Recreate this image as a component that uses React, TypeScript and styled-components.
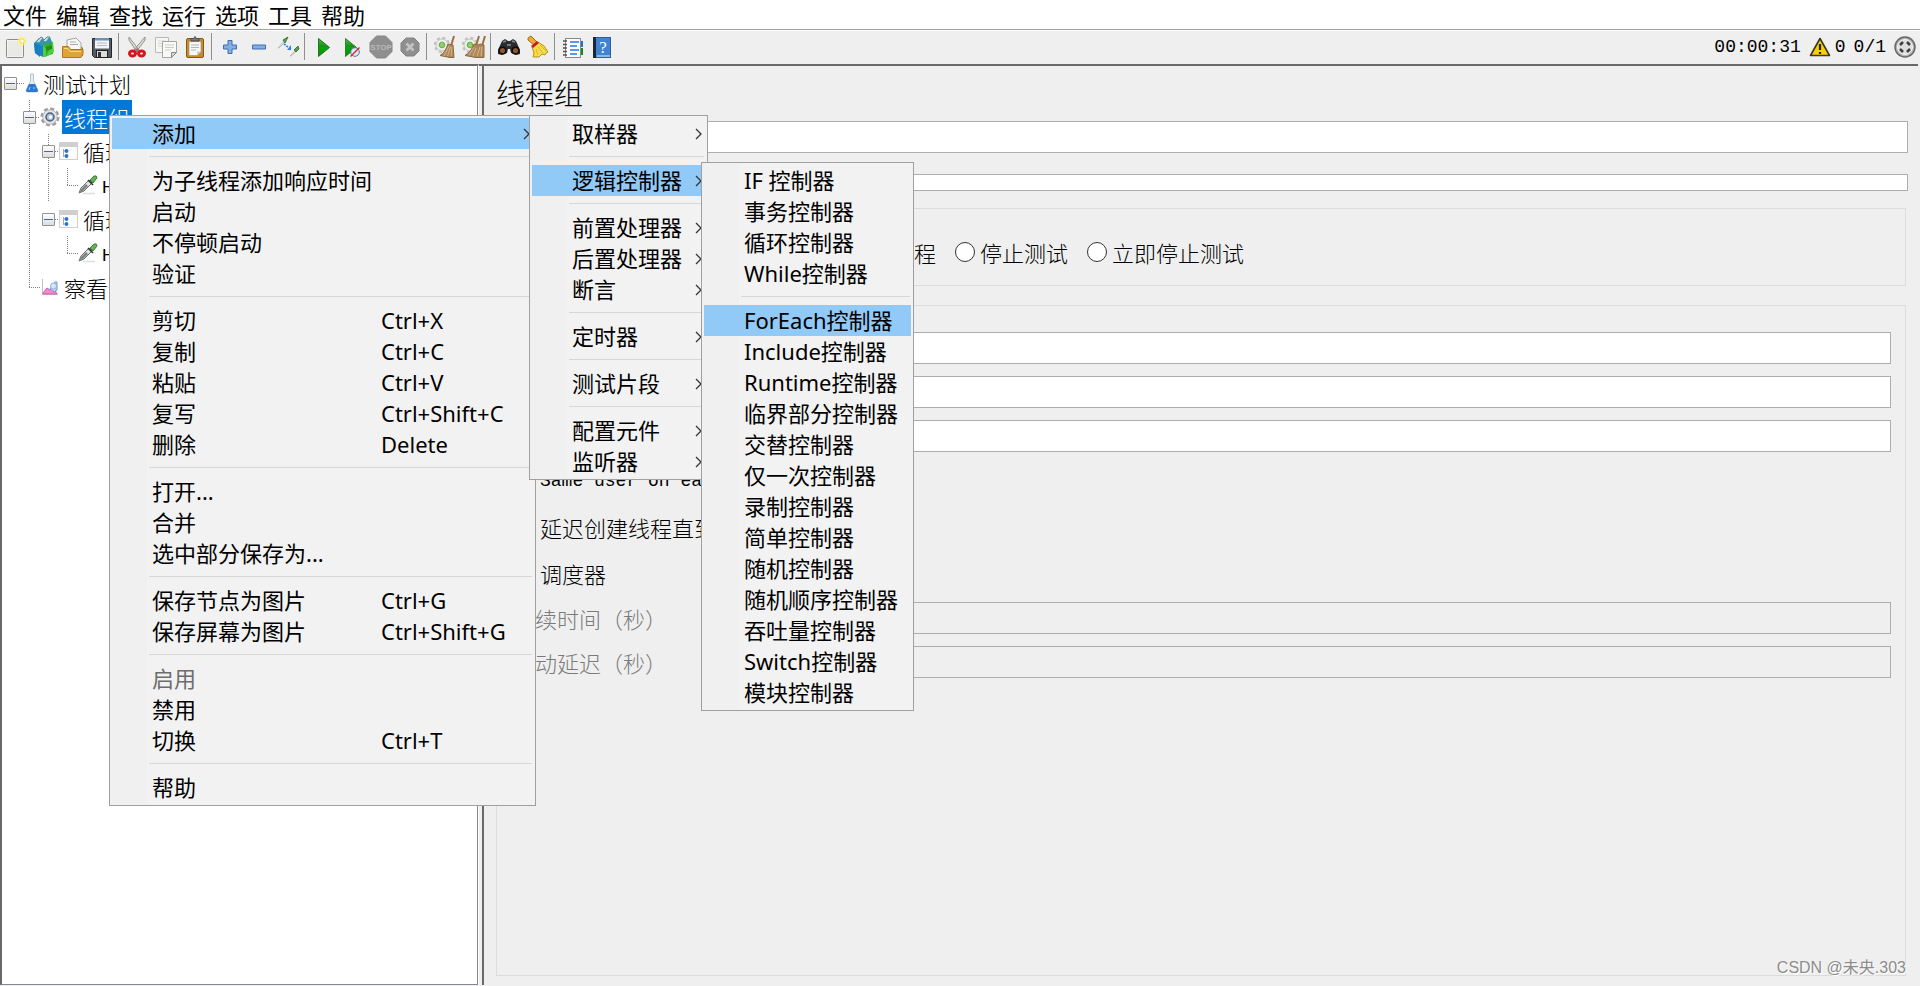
import React from "react";
import styled, { createGlobalStyle } from "styled-components";

const SANS = `"Noto Sans", "Noto Sans CJK SC", sans-serif`;
const SONG = `"Noto Sans CJK SC", sans-serif`;
const MONO = `"Liberation Mono", monospace`;

const Global = createGlobalStyle`
  *, *::before, *::after { box-sizing: border-box; }
  body { margin: 0; background: #fff; color: #000; }
  button, input { font: inherit; color: inherit; }
`;

/* ---------- frame ---------- */

const Window = styled.div`
  position: relative;
  display: flex;
  flex-direction: column;
  min-height: 100vh;
  overflow: hidden;
  font: 22px/30px ${SANS};
`;

const MenuBar = styled.nav`
  display: flex;
  gap: 9px;
  height: 30px;
  padding-left: 3px;
  background: #fff;
  border-bottom: 1px solid #a0a0a0;
`;

const BarItem = styled.button`
  padding: 0;
  border: 0;
  background: none;
  line-height: 28px;
`;

const ToolBar = styled.div`
  display: flex;
  align-items: center;
  height: 34px;
  padding: 0 4px 2px 0;
  background: #efefef;
  border-top: 1px solid #fff;
`;

const Tool = styled.button`
  display: flex;
  align-items: center;
  justify-content: center;
  width: 29px;
  height: 30px;
  padding: 0;
  border: 0;
  background: none;
`;

const ToolDivider = styled.span`
  width: 2px;
  height: 27px;
  margin: 0 2px;
  background: #8f8f8f;
  border-right: 1px solid #efefef;
`;

const Status = styled.div`
  display: flex;
  align-items: center;
  gap: 8px;
  margin-left: auto;
  font: 18px/30px ${MONO};
`;

const Warnings = styled.span`
  display: flex;
  align-items: center;
  gap: 4px;
`;

const Main = styled.main`
  display: flex;
  flex: 1;
  padding: 0 2px 1px 0;
  background: #efefef;
`;

/* ---------- tree ---------- */

const TreePane = styled.aside`
  flex: 0 0 478px;
  background: #fff;
  border: 1px solid #828790;
  border-top: 2px solid #696969;
  border-left: 2px solid #696969;
`;

const Splitter = styled.div`
  flex: 0 0 4px;
  background: #efefef;
  border-left: 1px solid #fff;
  border-top: 2px solid #696969;
`;

const Branch = styled.ul<{ $root?: boolean }>`
  margin: 0;
  padding: 0 0 0 ${(p) => (p.$root ? 0 : 19)}px;
  list-style: none;
  font-family: ${SONG};
  font-weight: 300;
`;

const Node = styled.li<{ $guide?: boolean }>`
  background: ${(p) =>
    p.$guide
      ? "repeating-linear-gradient(#808080 0 1px, transparent 1px 2px) 8px 0 / 1px 100% no-repeat"
      : "none"};
`;

const NodeRow = styled.div`
  display: flex;
  align-items: center;
  height: 34px;
`;

const Expander = styled.button`
  display: flex;
  align-items: center;
  justify-content: center;
  flex: none;
  width: 13px;
  height: 13px;
  margin: 0 0 0 2px;
  padding: 0;
  border: 1px solid #919191;
  border-radius: 1px;
  background: linear-gradient(#fff, #dcdcdc);
  &::before {
    content: "";
    width: 9px;
    height: 1px;
    background: #4b63a7;
  }
`;

const Dots = styled.span<{ $w: number }>`
  width: ${(p) => p.$w}px;
  height: 1px;
  background: repeating-linear-gradient(90deg, #808080 0 1px, transparent 1px 2px);
`;

const Elbow = styled.span`
  align-self: flex-start;
  width: 11px;
  height: 18px;
  margin-left: 8px;
  background:
    repeating-linear-gradient(#808080 0 1px, transparent 1px 2px) 0 0 / 1px 100% no-repeat,
    repeating-linear-gradient(90deg, #808080 0 1px, transparent 1px 2px) 0 100% / 100% 1px no-repeat;
`;

const NodeIcon = styled.span`
  display: flex;
  flex: none;
  margin-right: 2px;
`;

const NodeLabel = styled.span<{ $selected?: boolean }>`
  padding: 0 2px;
  line-height: 34px;
  white-space: nowrap;
  color: ${(p) => (p.$selected ? "#fff" : "#000")};
  background: ${(p) => (p.$selected ? "#0078d7" : "none")};
`;

/* ---------- editor ---------- */

const Editor = styled.section`
  display: flex;
  flex: 1;
  flex-direction: column;
  padding: 6px 12px 9px;
  border-top: 2px solid #696969;
  border-left: 2px solid #696969;
  font-family: ${SONG};
  font-weight: 300;
`;

const Title = styled.h1`
  margin: 0 0 9px;
  font: 300 29px/40px ${SONG};
`;

const Field = styled.label`
  display: flex;
  align-items: center;
  margin: 0;
  white-space: nowrap;
`;

const HeadFields = styled.div`
  display: flex;
  flex-direction: column;
  gap: 21px;
  margin: 0 -2px 7px 0;
`;

const Caption = styled.span<{ $w: number; $off?: boolean }>`
  flex: 0 0 ${(p) => p.$w}px;
  line-height: 17px;
  color: ${(p) => (p.$off ? "#7a7a7a" : "#000")};
`;

const TextBox = styled.input<{ $slim?: boolean }>`
  flex: 1;
  min-width: 0;
  height: ${(p) => (p.$slim ? 17 : 32)}px;
  padding: 0 4px;
  border: 1px solid #abadb3;
  border-radius: 0;
  background: #fff;
  outline: none;
  &:disabled {
    background: #efefef;
  }
`;

const Group = styled.fieldset`
  min-width: 0;
  margin: 0;
  padding: 17px 14px 0 16px;
  border: 1px solid #dcdcdc;
`;

const ActionGroup = styled(Group)`
  margin-bottom: 9px;
  padding: 18px;
`;

const PropertiesGroup = styled(Group)`
  flex: 1;
`;

const Legend = styled.legend`
  height: 20px;
  padding: 0 2px;
  line-height: 20px;
`;

const Radios = styled.div`
  display: flex;
  gap: 19px;
  height: 31px;
`;

const Choice = styled.label`
  display: flex;
  align-items: center;
  gap: 5px;
  white-space: nowrap;
`;

const Radio = styled.input`
  appearance: none;
  flex: none;
  width: 20px;
  height: 20px;
  margin: 0;
  border: 1px solid #333;
  border-radius: 50%;
  background: #fff;
  &:checked {
    background: radial-gradient(#333 0 5px, #fff 6px);
  }
`;

const Tick = styled.input`
  flex: none;
  width: 20px;
  height: 20px;
  margin: 0 2px 0 0;
`;

const Rows = styled.div`
  display: flex;
  flex-direction: column;
  gap: 12px;
`;

const TickRow = styled(Choice)`
  height: 34px;
`;

const LatinText = styled.span`
  font-family: ${MONO};
  font-size: 18px;
`;

/* ---------- popup menus ---------- */

const Popup = styled.ul<{ $x: number; $y: number; $w: number }>`
  position: absolute;
  left: ${(p) => p.$x}px;
  top: ${(p) => p.$y}px;
  width: ${(p) => p.$w}px;
  margin: 0;
  padding: 2px;
  border: 1px solid #a0a0a0;
  background: linear-gradient(90deg, #f0f0f0 37px, #f2f2f2 37px);
  list-style: none;
`;

const Line = styled.li`
  height: 16px;
  padding: 7px 1px 0 37px;
  &::before {
    content: "";
    display: block;
    height: 1px;
    background: #d7d7d7;
  }
`;

const Entry = styled.button<{ $active?: boolean }>`
  display: flex;
  align-items: center;
  width: 100%;
  height: 31px;
  padding: 0 0 0 40px;
  border: 0;
  background: ${(p) => (p.$active ? "#91c9f7" : "none")};
  text-align: left;
  white-space: nowrap;
  line-height: 31px;
  &:disabled {
    color: #6d6d6d;
  }
`;

const EntryText = styled.span`
  flex: 1;
`;

const Accelerator = styled.span`
  flex: 0 0 152px;
`;

const Arrow = styled.svg`
  flex: none;
  margin-right: 3px;
`;

/* ---------- icons ---------- */

type IconProps = { w?: number; h?: number; children: React.ReactNode };
const Svg = ({ w = 24, h = 24, children }: IconProps) => (
  <svg width={w} height={h} viewBox={`0 0 ${w} ${h}`} fill="none" aria-hidden="true">
    {children}
  </svg>
);

const NewIcon = () => (
  <Svg>
    <rect x="3.500" y="4.500" width="17" height="18" rx="1" fill="#f4f4f2" stroke="#8c8c88" />
    <rect x="5" y="6" width="14" height="15" fill="#e9e9e7" />
    <circle cx="19" cy="6" r="4.500" fill="#fff27a" opacity=".7" />
    <circle cx="19" cy="6" r="2.200" fill="#fff" stroke="#f3d93a" />
  </Svg>
);
const TemplatesIcon = () => (
  <Svg>
    <path d="M2 8l5-5 6 1 5-2 2 5-3 13-6 2-8-4z" fill="#2c97b8" />
    <path d="M4 7l5-5 2 1-4 5zM11 6l4-4 3 0-4 5z" fill="#c4dfe6" stroke="#5b8790" />
    <path d="M2 8l6 2v12l-5-4z" fill="#1580b8" />
    <path d="M6 10l6 1v11l-5-2z" fill="#1a7ed0" />
    <path d="M11 10l10-3v12l-10 3z" fill="#35ad2b" />
    <path d="M11 10l3 4v8l-3 0zM21 7l1 10-8 5z" fill="#50cf3c" />
    <path d="M14 12l6-2v4l-6 2z" fill="#268b1e" />
  </Svg>
);
const OpenIcon = () => (
  <Svg>
    <path d="M2 12h4l1-3h11l4 4v8H3z" fill="#b57a15" />
    <path d="M6 14V5l9-2 5 5v8H6z" fill="#f7f7f5" stroke="#a5a5a0" />
    <path d="M9 7h6M9 9.500h8" stroke="#aaa" />
    <path d="M1.500 11.500h6l2 3h12.500v4.500l-2 3.500h-18.500z" fill="#dfa433" stroke="#b27711" />
    <path d="M3 13.500h4l2 3h11" stroke="#f7d684" />
  </Svg>
);
const SaveIcon = () => (
  <Svg>
    <path d="M2.500 3.500h19v19h-17l-2-2z" fill="#565b62" stroke="#24272b" />
    <rect x="5" y="3.500" width="14" height="10" fill="#f3f5f8" />
    <rect x="5" y="3.500" width="14" height="2" fill="#6b8fc5" />
    <path d="M7 8h10M7 10.500h10" stroke="#b7bcc4" />
    <rect x="6.500" y="15.500" width="11" height="7" fill="#dcdcdc" stroke="#222" />
    <rect x="8" y="17" width="3" height="5" fill="#333" />
  </Svg>
);
const CutIcon = () => (
  <Svg>
    <path d="M4 2l10 13-2 2L4 5zM20 2L9 15l2 2 9-12z" fill="#dfe0de" stroke="#8f918d" />
    <ellipse cx="7.500" cy="18.500" rx="3" ry="2.500" stroke="#d01818" strokeWidth="3" />
    <ellipse cx="16.500" cy="18.500" rx="3" ry="2.500" stroke="#d01818" strokeWidth="3" />
    <circle cx="12" cy="14.500" r="1.200" fill="#777" />
  </Svg>
);
const CopyIcon = () => (
  <Svg>
    <path d="M1.500 2.500h13v15h-13z" fill="#f6f6f5" stroke="#b9b9b5" />
    <path d="M4 6h8M4 8.500h8M4 11h5" stroke="#d6d6d3" />
    <path d="M8.500 6.500h14v11l-5 5h-9z" fill="#f9f9f8" stroke="#a5a5a1" />
    <path d="M11 10h9M11 12.500h9M11 15h6" stroke="#ccc" />
    <path d="M22.500 17.500h-5v5z" fill="#d7d7d4" stroke="#888a85" />
  </Svg>
);
const PasteIcon = () => (
  <Svg>
    <rect x="3.500" y="3.500" width="17" height="19" rx="1.500" fill="#c58a2d" stroke="#8f5902" />
    <path d="M6 6.500h12v10l-4 4H6z" fill="#f7f7f6" stroke="#999" strokeWidth=".7" />
    <path d="M8 10h8M8 12.500h8M8 15h5" stroke="#b5b5b2" />
    <path d="M18 16.500h-4v4z" fill="#ccc" />
    <path d="M8 6V3.500h2.500L12 1.500l1.500 2H16V6z" fill="#777a74" stroke="#4c4f4a" />
  </Svg>
);
const PlusIcon = () => (
  <Svg w={16} h={16}>
    <path d="M6 1.500h4V6h4.500v4H10v4.500H6V10H1.500V6H6z" fill="#85ade0" stroke="#3c6fb4" />
  </Svg>
);
const MinusIcon = () => (
  <Svg w={16} h={16}>
    <path d="M1.500 6h13v4h-13z" fill="#85ade0" stroke="#3c6fb4" />
  </Svg>
);
const ToggleIcon = () => (
  <Svg>
    <path d="M2 13l7-8 1 1-7 7zM14 21l6-6 1 1-6 5z" fill="#e8e8e6" stroke="#b4b6b2" strokeWidth=".8" />
    <path d="M7 5l5-3-3 6zM18 15l4-4 1 3-3 3z" fill="#5c9a4d" stroke="#457a3a" />
    <path d="M8 9l4 3" stroke="#2e7ff0" strokeWidth="1.600" strokeDasharray="2 1" />
    <path d="M15 15v-5l-4 5z" fill="#2e7ff0" />
  </Svg>
);
const PlayIcon = () => (
  <Svg>
    <defs>
      <linearGradient id="play" x1="0" y1="0" x2="0" y2="1">
        <stop offset="0" stopColor="#52b648" />
        <stop offset=".5" stopColor="#128a12" />
        <stop offset=".5" stopColor="#06a806" />
        <stop offset="1" stopColor="#0a8a0a" />
      </linearGradient>
    </defs>
    <path d="M7.500 3.500L18.500 12.500l-11 9z" fill="url(#play)" stroke="#1c7a1c" />
  </Svg>
);
const PlayNoTimersIcon = () => (
  <Svg>
    <path d="M5.500 3.500L16.500 12.500l-11 9z" fill="url(#play)" stroke="#2c862c" />
    <circle cx="15" cy="17" r="4.300" fill="#dfe9f3" stroke="#5377a8" />
    <path d="M10.500 21.500L19.500 12.500" stroke="#de2a20" strokeWidth="1.400" />
  </Svg>
);
const StopWord = styled.text`
  font: bold 8px "Liberation Sans", sans-serif;
`;
const StopIcon = () => (
  <Svg>
    <path d="M7.500 1h9L23 7.500v9L16.500 23h-9L1 16.500v-9z" fill="#8f8f8f" stroke="#858585" />
    <StopWord x="12" y="15" textAnchor="middle" fill="#b9b9b9">STOP</StopWord>
  </Svg>
);
const ShutdownIcon = () => (
  <Svg w={20} h={20}>
    <path d="M6 1h8l5 5v8l-5 5H6l-5-5V6z" fill="#8f8f8f" stroke="#818181" />
    <path d="M6.500 6.500l7 7M13.500 6.500l-7 7" stroke="#c4c4c4" strokeWidth="2.600" />
  </Svg>
);
const Gear = ({ x }: { x: number }) => (
  <>
    <circle cx={x} cy="10" r="7" stroke="#c0c2be" strokeWidth="2.500" strokeDasharray="3 2.500" />
    <circle cx={x} cy="10" r="6" fill="#ececea" stroke="#c4c6c1" />
    <circle cx={x} cy="10" r="2.800" fill="#8ed267" stroke="#6aaa48" />
  </>
);
const ClearIcon = () => (
  <Svg>
    <Gear x={9} />
    <path d="M21 1l-3 10" stroke="#9c7046" strokeWidth="2" />
    <path d="M15 9l5 1 1 12.500h-4l-10-2c4-2 6-6 8-11.500z" fill="#b08757" stroke="#8b6840" />
    <path d="M16 11l-5 10M17.500 12l-3 9M19 12l-1 9" stroke="#dcc19b" strokeWidth=".8" />
  </Svg>
);
const ClearAllIcon = () => (
  <Svg>
    <Gear x={8} />
    <path d="M17 1l-3 10M23 1l-3 10" stroke="#9c7046" strokeWidth="2" />
    <path d="M12 9l4 1 2-1 4 1 0 12.500h-8l-11-2c4-2 7-6 9-11.500z" fill="#b08757" stroke="#8b6840" />
    <path d="M12 12l-5 8M14 13l-3 8M18 12l-3 9M20 12l-1 9" stroke="#dcc19b" strokeWidth=".8" />
  </Svg>
);
const SearchIcon = () => (
  <Svg>
    <path d="M8 4l3 2h2l3-2 3 2 4 9v4l-4 1-5-2-1-4h-2l-1 4-5 2-4-1v-4l4-9z" fill="#2a2c2d" />
    <path d="M6 7l3-1M15 6l3 1M10 10h4" stroke="#8c9091" strokeWidth="1.500" />
    <circle cx="5.500" cy="15.500" r="3.300" fill="#8f5630" stroke="#0d0d0d" strokeWidth="1.500" />
    <circle cx="18.500" cy="15.500" r="3.300" fill="#8f5630" stroke="#0d0d0d" strokeWidth="1.500" />
  </Svg>
);
const BroomIcon = () => (
  <Svg>
    <path d="M2 3l3-2 6 6-3 3-6-5z" fill="#eba93c" stroke="#b26b0a" />
    <path d="M6 12l6-5 6 4 4 6-2 1-1 2-3-1-3 3-6 0 1-4z" fill="#f6dc4c" stroke="#b8930c" />
    <path d="M5 11l6-5 2 2-6 5z" fill="#cc1b1b" />
    <path d="M12 12l5 6M14 10l6 6M10 14l2 6" stroke="#d3ad22" strokeWidth=".8" />
  </Svg>
);
const ListIcon = () => (
  <Svg>
    <rect x="19" y="6" width="3" height="6" fill="#2471c8" />
    <rect x="19" y="13" width="3" height="7" fill="#0b8b17" />
    <rect x="4.500" y="3.500" width="15" height="19" fill="#fafafa" stroke="#8a8a8a" />
    <path d="M9 7h9M9 11h7M9 15h9M9 19h7" stroke="#2579e6" strokeWidth="1.500" />
    <path d="M2 6h4M2 9.500h4M2 13h4M2 16.500h4M2 20h4" stroke="#555" strokeWidth="1.500" />
  </Svg>
);
const HelpWord = styled.text`
  font: 17px "Liberation Serif", serif;
`;
const HelpIcon = () => (
  <Svg>
    <rect x="3.500" y="2.500" width="17" height="20" fill="#4083d3" stroke="#2d5f9e" />
    <path d="M3 2h3v21H3z" fill="#1c2733" />
    <path d="M7 21h13" stroke="#e3ecf6" />
    <HelpWord x="13" y="18" textAnchor="middle" fill="#fff">?</HelpWord>
  </Svg>
);
const WarningIcon = () => (
  <Svg w={22} h={20}>
    <path d="M11 1.500L20.500 18.500h-19z" fill="#f9d000" stroke="#3a3420" strokeWidth="1.600" strokeLinejoin="round" />
    <path d="M11 7v6M11 15v2" stroke="#222" strokeWidth="2.200" />
  </Svg>
);
const RemoteIcon = () => (
  <Svg w={22} h={22}>
    <circle cx="11" cy="11" r="10" fill="#b4b4b4" stroke="#686868" strokeWidth="1.500" />
    <circle cx="11" cy="11" r="7.500" fill="#dedede" stroke="#f4f4f4" />
    <path d="M6 9l3-3M13 6l3 3M16 13l-3 3M9 16l-3-3" stroke="#3f3f3f" strokeWidth="2.600" />
  </Svg>
);
const FlaskIcon = () => (
  <Svg w={14} h={20}>
    <path d="M5.500 1v7L1 17.500q0 1.500 2 1.500h8q2 0 2-1.500L8.500 8V1z" fill="#e6eef4" stroke="#a9b7c2" strokeWidth=".8" />
    <path d="M4 11L1 17.500q0 1.500 2 1.500h8q2 0 2-1.500L10 11z" fill="#2b78d2" />
    <path d="M5 14l-1 3M8 15h2" stroke="#9fd0ff" />
  </Svg>
);
const GearIcon = () => (
  <Svg w={20} h={20}>
    <circle cx="10" cy="10" r="8.300" stroke="#9a9a9a" strokeWidth="2.400" strokeDasharray="4 2.520" />
    <circle cx="10" cy="10" r="7.200" fill="#e6e6e6" stroke="#b4b4b4" />
    <circle cx="10" cy="10" r="4" fill="#a9bbdc" stroke="#4d5f84" strokeWidth="1.500" />
    <circle cx="10.500" cy="10" r="1.800" fill="#fff" />
  </Svg>
);
const ControllerIcon = () => (
  <Svg w={20} h={20}>
    <rect x=".5" y="1.500" width="18" height="17" fill="#fcfcfc" stroke="#d0d0d0" />
    <rect x="0" y="1" width="19" height="5" fill="#cfcfcf" />
    <path d="M4.500 8v8M4.500 10h2M4.500 15h2" stroke="#aaa" />
    <circle cx="7.500" cy="10" r="1.900" fill="#2774cf" />
    <circle cx="7.500" cy="15" r="1.900" fill="#2774cf" />
  </Svg>
);
const DropperIcon = () => (
  <Svg w={20} h={20}>
    <path d="M5 18.500h12" stroke="#dedede" strokeWidth="1.500" />
    <path d="M1 18l2-5 8-8 3 3-8 8z" fill="#dfe3e3" stroke="#6c7070" />
    <path d="M1 18l2-4 5-5 2 2-5 5z" fill="#7f8484" />
    <path d="M10 5l5 5" stroke="#333" strokeWidth="1.600" />
    <path d="M12 5l4-4q3-1 3 2l-4 5z" fill="#63b355" stroke="#3c8033" />
  </Svg>
);
const GraphIcon = () => (
  <Svg w={20} h={20}>
    <path d="M2.500 2v15.500H18" stroke="#c2c2c2" />
    <path d="M3 16l4-5 3 2 3-3 4 7H3z" fill="#f08ac9" stroke="#d958ac" />
    <path d="M10 12l5-7 2 0v8l-3 2z" fill="#b9d2f1" stroke="#6c9ad2" />
    <circle cx="13.500" cy="9" r="3" fill="#d6e6f8" stroke="#8eb2de" />
  </Svg>
);

/* ---------- data ---------- */

const menuBar = ["文件", "编辑", "查找", "运行", "选项", "工具", "帮助"];

const tools: ([string, () => React.ReactElement] | null)[] = [
  ["新建", NewIcon], ["模板", TemplatesIcon], ["打开", OpenIcon], ["保存", SaveIcon], null,
  ["剪切", CutIcon], ["复制", CopyIcon], ["粘贴", PasteIcon], null,
  ["展开", PlusIcon], ["折叠", MinusIcon], ["切换", ToggleIcon], null,
  ["启动", PlayIcon], ["不停顿启动", PlayNoTimersIcon], ["停止", StopIcon], ["关闭", ShutdownIcon], null,
  ["清除", ClearIcon], ["清除全部", ClearAllIcon], null,
  ["查找", SearchIcon], ["重置查找", BroomIcon], null,
  ["函数助手", ListIcon], ["帮助", HelpIcon],
];

type Item = { text: string; keys?: string; sub?: boolean; active?: boolean; off?: boolean } | null;
const subs = (...names: string[]): Item[] => names.map((text) => ({ text, sub: true }));
const plain = (...names: string[]): Item[] => names.map((text) => ({ text }));

const nodeMenu: Item[] = [
  { text: "添加", sub: true, active: true }, null,
  ...plain("为子线程添加响应时间", "启动", "不停顿启动", "验证"), null,
  { text: "剪切", keys: "Ctrl+X" },
  { text: "复制", keys: "Ctrl+C" },
  { text: "粘贴", keys: "Ctrl+V" },
  { text: "复写", keys: "Ctrl+Shift+C" },
  { text: "删除", keys: "Delete" }, null,
  ...plain("打开...", "合并", "选中部分保存为..."), null,
  { text: "保存节点为图片", keys: "Ctrl+G" },
  { text: "保存屏幕为图片", keys: "Ctrl+Shift+G" }, null,
  { text: "启用", off: true }, { text: "禁用" },
  { text: "切换", keys: "Ctrl+T" }, null,
  { text: "帮助" },
];

const addMenu: Item[] = [
  ...subs("取样器"), null,
  { text: "逻辑控制器", sub: true, active: true }, null,
  ...subs("前置处理器", "后置处理器", "断言"), null,
  ...subs("定时器"), null,
  ...subs("测试片段"), null,
  ...subs("配置元件", "监听器"),
];

const controllerMenu: Item[] = [
  ...plain("IF 控制器", "事务控制器", "循环控制器", "While控制器"), null,
  { text: "ForEach控制器", active: true },
  ...plain(
    "Include控制器", "Runtime控制器", "临界部分控制器", "交替控制器", "仅一次控制器", "录制控制器",
    "简单控制器", "随机控制器", "随机顺序控制器", "吞吐量控制器", "Switch控制器", "模块控制器"
  ),
];

const PopupMenu = ({ x, y, w, items, label }: { x: number; y: number; w: number; items: Item[]; label: string }) => (
  <Popup $x={x} $y={y} $w={w} role="menu" aria-label={label}>
    {items.map((it, i) =>
      it === null ? (
        <Line key={i} role="separator" />
      ) : (
        <li key={i} role="none">
          <Entry role="menuitem" $active={it.active} disabled={it.off} aria-haspopup={it.sub ? "menu" : undefined}>
            <EntryText>{it.text}</EntryText>
            {it.keys && <Accelerator>{it.keys}</Accelerator>}
            {it.sub && (
              <Arrow width="7" height="12" viewBox="0 0 7 12" fill="none" aria-hidden="true">
                <path d="M1 1l5 5-5 5" stroke="#333" strokeWidth="1.300" />
              </Arrow>
            )}
          </Entry>
        </li>
      )
    )}
  </Popup>
);

const LoopNode = ({ guide }: { guide?: boolean }) => (
  <Node $guide={guide}>
    <NodeRow>
      <Expander aria-label="折叠" />
      <Dots $w={4} />
      <NodeIcon><ControllerIcon /></NodeIcon>
      <NodeLabel>循环控制器</NodeLabel>
    </NodeRow>
    <Branch>
      <Node>
        <NodeRow>
          <Elbow />
          <NodeIcon><DropperIcon /></NodeIcon>
          <NodeLabel><LatinText>HTTP</LatinText>请求</NodeLabel>
        </NodeRow>
      </Node>
    </Branch>
  </Node>
);

export default function App() {
  return (
    <Window>
      <Global />
      <MenuBar>
        {menuBar.map((m) => (
          <BarItem key={m}>{m}</BarItem>
        ))}
      </MenuBar>
      <ToolBar role="toolbar">
        {tools.map((t, i) => {
          if (t === null) return <ToolDivider key={i} />;
          const [name, Icon] = t;
          return (
            <Tool key={i} aria-label={name}>
              <Icon />
            </Tool>
          );
        })}
        <Status>
          <span>00:00:31</span>
          <Warnings>
            <WarningIcon />0
          </Warnings>
          <span>0/1</span>
          <RemoteIcon />
        </Status>
      </ToolBar>

      <Main>
        <TreePane>
          <Branch $root>
            <Node>
              <NodeRow>
                <Expander aria-label="折叠" />
                <Dots $w={8} />
                <NodeIcon><FlaskIcon /></NodeIcon>
                <NodeLabel>测试计划</NodeLabel>
              </NodeRow>
              <Branch>
                <Node $guide>
                  <NodeRow>
                    <Expander aria-label="折叠" />
                    <Dots $w={4} />
                    <NodeIcon><GearIcon /></NodeIcon>
                    <NodeLabel $selected>线程组</NodeLabel>
                  </NodeRow>
                  <Branch>
                    <LoopNode guide />
                    <LoopNode />
                  </Branch>
                </Node>
                <Node>
                  <NodeRow>
                    <Elbow />
                    <NodeIcon><GraphIcon /></NodeIcon>
                    <NodeLabel>察看结果树</NodeLabel>
                  </NodeRow>
                </Node>
              </Branch>
            </Node>
          </Branch>
        </TreePane>
        <Splitter />
        <Editor>
          <Title>线程组</Title>
          <HeadFields>
            <Field>
              <Caption $w={80}>名称：</Caption>
              <TextBox type="text" />
            </Field>
            <Field>
              <Caption $w={80}>注释：</Caption>
              <TextBox type="text" $slim />
            </Field>
          </HeadFields>
          <ActionGroup>
            <Legend>在取样器错误后要执行的动作</Legend>
            <Radios>
              {["继续", "启动下一进程循环", "停止线程", "停止测试", "立即停止测试"].map((r, i) => (
                <Choice key={r}>
                  <Radio type="radio" name="on-error" defaultChecked={i === 0} />
                  {r}
                </Choice>
              ))}
            </Radios>
          </ActionGroup>
          <PropertiesGroup>
            <Legend>线程属性</Legend>
            <Rows>
              {["线程数：", "时间（秒）：", "循环次数"].map((f) => (
                <Field key={f}>
                  <Caption $w={200}>{f}</Caption>
                  <TextBox type="text" />
                </Field>
              ))}
              <TickRow>
                <Tick type="checkbox" defaultChecked />
                <LatinText>Same user on each iteration</LatinText>
              </TickRow>
              <TickRow>
                <Tick type="checkbox" />
                延迟创建线程直到需要
              </TickRow>
              <TickRow>
                <Tick type="checkbox" />
                调度器
              </TickRow>
              {["持续时间（秒）", "启动延迟（秒）"].map((f) => (
                <Field key={f}>
                  <Caption $w={200} $off>{f}</Caption>
                  <TextBox type="text" disabled />
                </Field>
              ))}
            </Rows>
          </PropertiesGroup>
        </Editor>
      </Main>

      <PopupMenu x={109} y={115} w={427} items={nodeMenu} label="线程组" />
      <PopupMenu x={529} y={115} w={179} items={addMenu} label="添加" />
      <PopupMenu x={701} y={162} w={213} items={controllerMenu} label="逻辑控制器" />
      <Watermark>CSDN @未央.303</Watermark>
    </Window>
  );
}

const Watermark = styled.span`
  position: absolute;
  right: 14px;
  bottom: 8px;
  color: #8c8c8c;
  font: 16px/20px "Liberation Sans", "Noto Sans CJK SC", sans-serif;
  text-shadow: 1px 1px 0 #fff;
`;
